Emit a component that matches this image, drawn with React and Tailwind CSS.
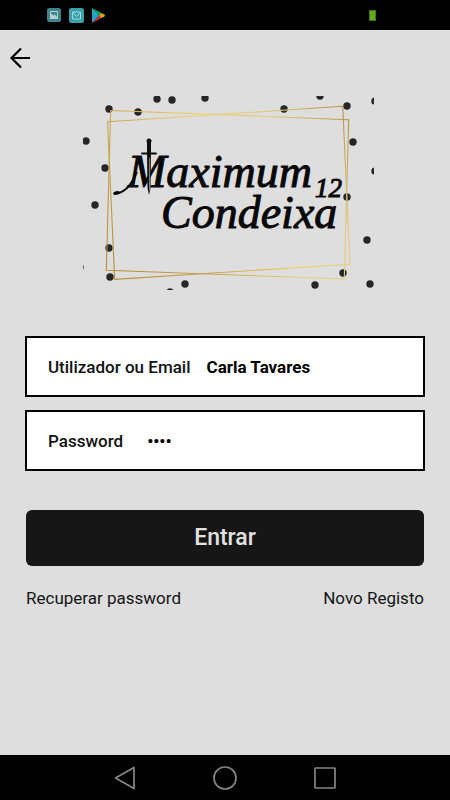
import React, { useState } from 'react';

const DOTS = [
  [86, 141], [109, 109], [138, 112], [157, 99], [172, 100], [205, 98],
  [105, 168], [284, 109], [320, 96], [347, 106], [353, 142], [375, 101],
  [375, 171], [95, 205], [109, 248], [110, 277], [80, 267], [185, 284],
  [170, 292], [347, 197], [367, 240], [343, 273], [370, 284], [315, 285],
];

const StatusBar = () => (
  <div className="flex h-[30px] items-center justify-between bg-black pl-[47px] pr-[74px]">
    <div className="flex items-center gap-2">
      <svg className="h-[14px] w-[14px]" viewBox="0 0 14 14" aria-hidden="true">
        <rect width="14" height="14" rx="2.5" fill="#40858c" />
        <rect x="3" y="3" width="8" height="8" fill="#b3cfd1" />
        <path d="M4 4h6v5L8 6.500 6.500 7.500 4 5.500z" fill="#40858c" />
      </svg>
      <svg className="h-[15px] w-[15px]" viewBox="0 0 15 15" aria-hidden="true">
        <rect width="15" height="15" rx="2.500" fill="#38a0ab" />
        <path d="M3.500 4h8v7h-8zM3.500 4.500l4 4 4-4" fill="none" stroke="#a8d8dc" />
      </svg>
      <svg className="h-[15px] w-[14px]" viewBox="0 0 14 15" aria-hidden="true">
        <path d="M0 0l7 7.500L0 15z" fill="#22a7c6" />
        <path d="M0 0l9.500 5L7 7.500z" fill="#18a85c" />
        <path d="M0 15l9.500-5L7 7.500z" fill="#cf2f45" />
        <path d="M9.500 5l3 1.500q1 1 0 2l-3 1.500L7 7.500z" fill="#d9a514" />
      </svg>
    </div>
    <div className="h-[11px] w-[7px] border border-[#3f7313] bg-[#66a81e]" />
  </div>
);

const Logo = () => (
  <svg className="w-[291px] max-w-full" viewBox="83 96 291 194" role="img" aria-label="Maximum 12 Condeixa">
    <defs>
      <linearGradient id="gold" gradientUnits="userSpaceOnUse" x1="107" y1="279" x2="350" y2="106">
        <stop offset="0" stopColor="#b58a35" />
        <stop offset="0.300" stopColor="#c9a552" />
        <stop offset="0.550" stopColor="#ecd06a" />
        <stop offset="0.750" stopColor="#e3cb80" />
        <stop offset="1" stopColor="#b48c3c" />
      </linearGradient>
    </defs>
    {DOTS.map(([x, y]) => (
      <circle key={`${x}-${y}`} cx={x} cy={y} r="3.700" fill="#262626" />
    ))}
    <g fill="none" stroke="url(#gold)" strokeWidth="1.100">
      <path d="M107.500 121.700L342.700 106.300L350 264.300L114.700 279.300z" />
      <path d="M110.700 110.500L348.700 119.700L344.300 279L106.300 270.300z" />
    </g>
    <g
      fill="#080808"
      stroke="#080808"
      strokeWidth="1"
      fontStyle="italic"
      className="font-['Liberation_Serif',serif]"
    >
      <text x="128" y="187" fontSize="46">Maximum</text>
      <text x="161" y="228" fontSize="46">Condeixa</text>
      <text x="315" y="197" fontSize="27">12</text>
    </g>
    {/* tail of the M */}
    <path d="M138 172C133 184 127 192 118 194.500Q112 196 113.500 192.500Q116 190 120 191.500C127 189 131 182 136 172z" fill="#080808" />
    {/* sword */}
    <path d="M147 142h4v12l-.5 34-1.500 7-1.500-7-.5-34z" fill="#111" />
    <path d="M149.500 158v32" stroke="#a59791" strokeWidth="0.800" />
    <path d="M142 153.500h14" stroke="#080808" strokeWidth="1.800" strokeLinecap="round" />
    <circle cx="149" cy="141" r="2.500" fill="#111" />
  </svg>
);

const Field = ({ id, label, gap, ...props }) => (
  <div className={`flex h-[61px] items-center border-2 border-black bg-white px-[21px] ${gap}`}>
    <label htmlFor={id} className="shrink-0 font-medium text-[#111]">{label}</label>
    <input id={id} className="min-w-0 flex-1 bg-transparent font-bold text-black outline-none" {...props} />
  </div>
);

const NavigationBar = () => (
  <nav className="flex h-[45px] items-center justify-center gap-[76px] bg-black text-[#858585]">
    <button type="button" aria-label="Back">
      <svg className="h-6 w-6" viewBox="0 0 24 24" fill="none" stroke="currentColor" strokeWidth="1.700" strokeLinejoin="round">
        <path d="M21 1.500v21L2.500 12z" />
      </svg>
    </button>
    <button type="button" aria-label="Home">
      <svg className="h-6 w-6" viewBox="0 0 24 24" fill="none" stroke="currentColor" strokeWidth="1.700">
        <circle cx="12" cy="12" r="11" />
      </svg>
    </button>
    <button type="button" aria-label="Recent apps">
      <svg className="h-6 w-6" viewBox="0 0 24 24" fill="none" stroke="currentColor" strokeWidth="1.700" strokeLinejoin="round">
        <rect x="2" y="2" width="20" height="20" rx="0.500" />
      </svg>
    </button>
  </nav>
);

const App = () => {
  const [user, setUser] = useState('Carla Tavares');
  const [password, setPassword] = useState('1234');

  return (
    <div className="flex min-h-screen flex-col bg-[#dedede] font-['Roboto',sans-serif] text-[17px] leading-7 text-[#151515]">
      <StatusBar />
      <main className="flex flex-1 flex-col">
        <header className="px-2 pt-4">
          <button type="button" aria-label="Voltar" className="block">
            <svg className="h-6 w-6" viewBox="0 0 24 24" fill="none" stroke="#000" strokeWidth="2.200">
              <path d="M22 12H3.500M13 2.500L3.500 12l9.500 9.500" />
            </svg>
          </button>
        </header>
        <div className="mt-[26px] flex justify-center pl-[7px]">
          <Logo />
        </div>
        <form className="mt-[46px] flex flex-col px-[25px]" onSubmit={(e) => e.preventDefault()}>
          <div className="flex flex-col gap-[13px]">
            <Field
              id="user"
              label="Utilizador ou Email"
              gap="gap-4"
              type="text"
              value={user}
              onChange={(e) => setUser(e.target.value)}
            />
            <Field
              id="password"
              label="Password"
              gap="gap-6"
              type="password"
              value={password}
              onChange={(e) => setPassword(e.target.value)}
            />
          </div>
          <button
            type="submit"
            className="mx-px mt-[39px] h-14 rounded-md bg-[#161616] text-[23px] font-medium text-[#e2e2e2]"
          >
            Entrar
          </button>
        </form>
        <div className="mt-[18px] flex justify-between px-[26px]">
          <a href="#recuperar">Recuperar password</a>
          <a href="#registo">Novo Registo</a>
        </div>
      </main>
      <NavigationBar />
    </div>
  );
};

export default App;
